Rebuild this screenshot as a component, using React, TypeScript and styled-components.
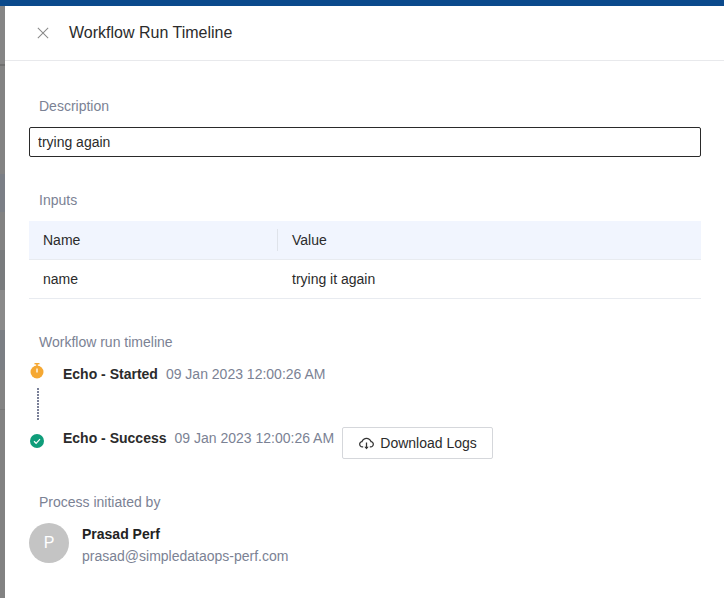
import styled, { createGlobalStyle } from "styled-components";
import { AiOutlineCloudDownload } from "react-icons/ai";

const inputs = [{ name: "name", value: "trying it again" }];

export default function App() {
	return (
		<>
			<GlobalStyle />
			<Page>
				<TopBar />
				<Body>
					<Backdrop />
					<Drawer>
						<Header>
							<CloseIcon viewBox="0 0 14 14" aria-label="Close">
								<path d="M1 1l12 12M13 1L1 13" />
							</CloseIcon>
							<Title>Workflow Run Timeline</Title>
						</Header>
						<Content>
							<SectionLabel>Description</SectionLabel>
							<DescriptionInput readOnly value="trying again" />

							<InputsLabel>Inputs</InputsLabel>
							<Table>
								<HeadRow>
									<NameCell>Name</NameCell>
									<ValueHead>Value</ValueHead>
								</HeadRow>
								{inputs.map((row) => (
									<BodyRow key={row.name}>
										<NameCell>{row.name}</NameCell>
										<ValueCell>{row.value}</ValueCell>
									</BodyRow>
								))}
							</Table>

							<TimelineLabel>Workflow run timeline</TimelineLabel>
							<Timeline>
								<StepRow>
									<StepIcon viewBox="0 0 14 16">
										<rect x="4.5" y="0" width="5" height="1.4" fill="#f5a833" />
										<rect x="6.2" y="1" width="1.6" height="2" fill="#f5a833" />
										<circle cx="7" cy="9" r="6.5" fill="#f5a833" />
										<path d="M7 5.5V9.5" stroke="#fff" strokeWidth="1.3" fill="none" />
									</StepIcon>
									<StepName>Echo - Started</StepName>
									<StepTime>09 Jan 2023 12:00:26 AM</StepTime>
								</StepRow>
								<Connector />
								<SuccessRow>
									<SuccessIcon viewBox="0 0 14 14">
										<circle cx="7" cy="7" r="7" fill="#0f9d7a" />
										<path d="M4 7.3l2.1 2L10 5.2" stroke="#fff" strokeWidth="1.2" fill="none" />
									</SuccessIcon>
									<StepName>Echo - Success</StepName>
									<StepTime>09 Jan 2023 12:00:26 AM</StepTime>
									<DownloadButton type="button">
										<AiOutlineCloudDownload size={17} color="#333" />
										Download Logs
									</DownloadButton>
								</SuccessRow>
							</Timeline>

							<InitiatedLabel>Process initiated by</InitiatedLabel>
							<User>
								<Avatar>P</Avatar>
								<UserText>
									<UserName>Prasad Perf</UserName>
									<UserEmail>prasad@simpledataops-perf.com</UserEmail>
								</UserText>
							</User>
						</Content>
					</Drawer>
				</Body>
			</Page>
		</>
	);
}

const GlobalStyle = createGlobalStyle`
	html, body {
		margin: 0;
		padding: 0;
		background: #fff;
	}
	body {
		font-family: "Liberation Sans", Arial, sans-serif;
	}
`;

const Page = styled.div`
	width: 724px;
	height: 598px;
	display: flex;
	flex-direction: column;
	overflow: hidden;
`;

const TopBar = styled.div`
	height: 6px;
	flex: none;
	background: #0b4a8c;
`;

const Body = styled.div`
	flex: 1;
	display: flex;
	min-height: 0;
`;

/* dimmed page behind the drawer, its rows still faintly showing */
const Backdrop = styled.div`
	width: 5px;
	flex: none;
	background: linear-gradient(
		180deg,
		#858585 0 58px,
		#707070 58px 60px,
		#838383 60px 168px,
		#7b7f86 168px 206px,
		#828282 206px 244px,
		#797b7d 244px 284px,
		#8a8a8a 284px 324px,
		#7b7f84 324px 364px,
		#838383 364px 403px,
		#787878 403px 404px,
		#828282 404px
	);
`;

const Drawer = styled.div`
	flex: 1;
	background: #fff;
	display: flex;
	flex-direction: column;
`;

const Header = styled.div`
	height: 55px;
	flex: none;
	box-sizing: border-box;
	border-bottom: 1px solid #e8e9ec;
	display: flex;
	align-items: center;
	padding-left: 32px;
	gap: 20px;
`;

const CloseIcon = styled.svg`
	width: 12px;
	height: 12px;
	fill: none;
	stroke: #8a8a8a;
	stroke-width: 1.2;
`;

const Title = styled.div`
	font-size: 16px;
	color: #2b2b2b;
`;

const Content = styled.div`
	padding: 37px 23px 0 24px;
	display: flex;
	flex-direction: column;
`;

const SectionLabel = styled.div`
	font-size: 14px;
	line-height: 16px;
	color: #7b8294;
	padding-left: 10px;
`;

const DescriptionInput = styled.input`
	margin-top: 13px;
	height: 30px;
	box-sizing: border-box;
	border: 1px solid #2a2a2a;
	border-radius: 2px;
	padding: 0 8px;
	font: 14px "Liberation Sans", Arial, sans-serif;
	color: #2b2b2b;
	outline: none;
`;

const InputsLabel = styled(SectionLabel)`
	margin-top: 35px;
`;

const Table = styled.div`
	margin-top: 13px;
	font-size: 14px;
	color: #2b2b2b;
`;

const HeadRow = styled.div`
	height: 39px;
	background: #f1f5fe;
	border-bottom: 1px solid #e8ebf0;
	box-sizing: border-box;
	display: grid;
	grid-template-columns: 248px 1fr;
	align-items: center;
`;

const BodyRow = styled.div`
	height: 39px;
	border-bottom: 1px solid #e8ebf0;
	box-sizing: border-box;
	display: grid;
	grid-template-columns: 248px 1fr;
	align-items: center;
`;

const NameCell = styled.div`
	padding-left: 14px;
`;

const ValueCell = styled.div`
	padding-left: 15px;
`;

const ValueHead = styled(ValueCell)`
	border-left: 1px solid #dfe3ea;
	padding-left: 14px;
	line-height: 22px;
`;

const TimelineLabel = styled(SectionLabel)`
	margin-top: 35px;
`;

const Timeline = styled.div`
	margin-top: 15px;
	display: flex;
	flex-direction: column;
`;

const StepRow = styled.div`
	display: flex;
	align-items: flex-start;
	height: 18px;
	font-size: 14px;
	line-height: 18px;
`;

const SuccessRow = styled(StepRow)`
	height: 32px;
	margin-top: 7px;
`;

const StepIcon = styled.svg`
	width: 14px;
	height: 16px;
	flex: none;
	margin: -2px 19px 0 1px;
`;

const SuccessIcon = styled.svg`
	width: 14px;
	height: 14px;
	flex: none;
	margin: 7px 19px 0 1px;
`;

const Connector = styled.div`
	width: 2px;
	height: 32px;
	margin: 5px 0 0 8px;
	background: repeating-linear-gradient(180deg, #7a8098 0 2px, transparent 2px 3px);
`;

const StepName = styled.span`
	font-weight: 700;
	color: #2b2b2b;
	${SuccessRow} & {
		margin-top: 2px;
	}
`;

const StepTime = styled.span`
	margin-left: 8px;
	color: #7b8294;
	${SuccessRow} & {
		margin-top: 2px;
	}
`;

const DownloadButton = styled.button`
	margin-left: 8px;
	width: 151px;
	height: 32px;
	background: #fff;
	border: 1px solid #d5d7db;
	border-radius: 2px;
	display: flex;
	align-items: center;
	justify-content: center;
	gap: 5px;
	font: 14px "Liberation Sans", Arial, sans-serif;
	color: #2b2b2b;
	padding: 0;
`;

const InitiatedLabel = styled(SectionLabel)`
	margin-top: 35px;
`;

const User = styled.div`
	margin-top: 12px;
	display: flex;
	align-items: center;
	gap: 13px;
`;

const Avatar = styled.div`
	width: 40px;
	height: 40px;
	border-radius: 50%;
	background: #c4c4c4;
	color: #fff;
	font-size: 16px;
	display: flex;
	align-items: center;
	justify-content: center;
`;

const UserText = styled.div`
	display: flex;
	flex-direction: column;
	gap: 6px;
	padding-top: 4px;
	font-size: 14px;
	line-height: 16px;
`;

const UserName = styled.div`
	font-weight: 700;
	color: #222;
`;

const UserEmail = styled.div`
	color: #7b8294;
`;
